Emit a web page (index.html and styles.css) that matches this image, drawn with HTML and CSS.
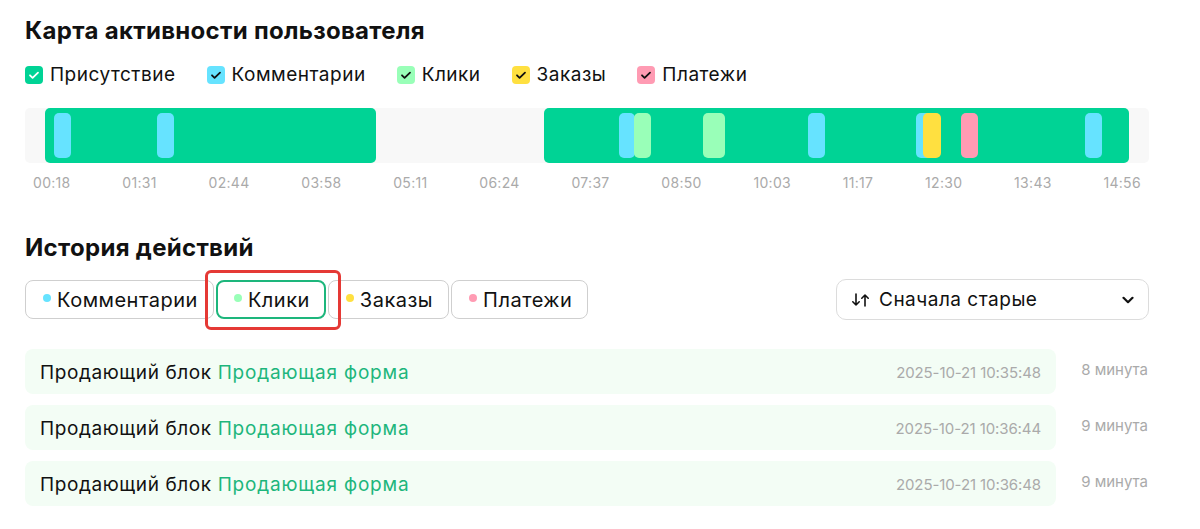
FILE: index.html
```html
<!DOCTYPE html>
<html lang="ru">
<head>
<meta charset="utf-8">
<title>Карта активности пользователя</title>
<link rel="stylesheet" href="styles.css">
</head>
<body>
<div class="page">
  <h1 class="title">Карта активности пользователя</h1>
  <div class="legend">
    <label class="legend-item"><span class="cb cb-presence"><svg viewBox="0 0 18 18"><path d="M5 9.3l2.6 2.6L13 6.6" fill="none" stroke="#fff" stroke-width="1.8" stroke-linecap="round" stroke-linejoin="round"/></svg></span>Присутствие</label>
    <label class="legend-item"><span class="cb cb-comment"><svg viewBox="0 0 18 18"><path d="M5 9.3l2.6 2.6L13 6.6" fill="none" stroke="#111" stroke-width="1.8" stroke-linecap="round" stroke-linejoin="round"/></svg></span>Комментарии</label>
    <label class="legend-item"><span class="cb cb-click"><svg viewBox="0 0 18 18"><path d="M5 9.3l2.6 2.6L13 6.6" fill="none" stroke="#111" stroke-width="1.8" stroke-linecap="round" stroke-linejoin="round"/></svg></span>Клики</label>
    <label class="legend-item"><span class="cb cb-order"><svg viewBox="0 0 18 18"><path d="M5 9.3l2.6 2.6L13 6.6" fill="none" stroke="#111" stroke-width="1.8" stroke-linecap="round" stroke-linejoin="round"/></svg></span>Заказы</label>
    <label class="legend-item"><span class="cb cb-pay"><svg viewBox="0 0 18 18"><path d="M5 9.3l2.6 2.6L13 6.6" fill="none" stroke="#111" stroke-width="1.8" stroke-linecap="round" stroke-linejoin="round"/></svg></span>Платежи</label>
  </div>

  <div class="track">
    <div class="seg" style="left:20px;width:331px"></div>
    <div class="seg" style="left:519px;width:585px"></div>
    <div class="mark m-comment" style="left:29px;width:17px"></div>
    <div class="mark m-comment" style="left:132px;width:17px"></div>
    <div class="mark m-comment" style="left:594px;width:16px"></div>
    <div class="mark m-click" style="left:609px;width:17px"></div>
    <div class="mark m-click" style="left:678px;width:22px"></div>
    <div class="mark m-comment" style="left:783px;width:17px"></div>
    <div class="mark m-comment" style="left:891px;width:17px"></div>
    <div class="mark m-order" style="left:898px;width:18px"></div>
    <div class="mark m-pay" style="left:936px;width:17px"></div>
    <div class="mark m-comment" style="left:1060px;width:17px"></div>
  </div>
  <div class="ticks">
    <span>00:18</span><span>01:31</span><span>02:44</span><span>03:58</span><span>05:11</span><span>06:24</span><span>07:37</span><span>08:50</span><span>10:03</span><span>11:17</span><span>12:30</span><span>13:43</span><span>14:56</span>
  </div>

  <h2 class="title title-2">История действий</h2>
  <div class="toolbar">
    <div class="chips">
      <button class="chip"><span class="dot d-comment"></span>Комментарии</button>
      <button class="chip chip-active"><span class="dot d-click"></span>Клики</button>
      <button class="chip"><span class="dot d-order"></span>Заказы</button>
      <button class="chip"><span class="dot d-pay"></span>Платежи</button>
      <span class="highlight"></span>
    </div>
    <button class="sort">
      <svg class="sort-icon" viewBox="0 0 20 16"><path d="M5 2v11M1.8 9.8L5 13l3.2-3.2" fill="none" stroke="#111" stroke-width="1.6" stroke-linecap="round" stroke-linejoin="round"/><path d="M14 14V3M10.8 6.2L14 3l3.2 3.2" fill="none" stroke="#111" stroke-width="1.6" stroke-linecap="round" stroke-linejoin="round"/></svg>
      <span class="sort-label">Сначала старые</span>
      <svg class="chev" viewBox="0 0 12 8"><path d="M1.5 1.8L6 6.2l4.5-4.4" fill="none" stroke="#111" stroke-width="2.2" stroke-linecap="round" stroke-linejoin="round"/></svg>
    </button>
  </div>

  <div class="list">
    <div class="row">
      <div class="card"><span class="card-text">Продающий блок <span class="accent">Продающая форма</span></span><span class="date">2025-10-21 10:35:48</span></div>
      <span class="ago">8 минута</span>
    </div>
    <div class="row">
      <div class="card"><span class="card-text">Продающий блок <span class="accent">Продающая форма</span></span><span class="date">2025-10-21 10:36:44</span></div>
      <span class="ago">9 минута</span>
    </div>
    <div class="row">
      <div class="card"><span class="card-text">Продающий блок <span class="accent">Продающая форма</span></span><span class="date">2025-10-21 10:36:48</span></div>
      <span class="ago">9 минута</span>
    </div>
  </div>
</div>
</body>
</html>
```

FILE: styles.css
```css
* { box-sizing: border-box; }
html, body { margin: 0; padding: 0; background: #fff; }
body {
  font-family: Inter, "Noto Sans", "DejaVu Sans", sans-serif;
  color: #111;
}
.page {
  width: 1124px;
  margin-left: 25px;
  padding-top: 16px;
}
.title {
  margin: 0;
  font-size: 24px;
  line-height: 30px;
  font-weight: 700;
  color: #111;
  letter-spacing: 0.3px;
}
.title-2 { margin-top: 42px; }

.legend {
  display: flex;
  gap: 31px;
  margin-top: 18px;
  height: 22px;
  align-items: center;
}
.legend-item {
  display: flex;
  align-items: center;
  gap: 7px;
  font-size: 19px;
  letter-spacing: 0.5px;
  line-height: 22px;
}
.cb {
  width: 18px;
  height: 18px;
  border-radius: 4px;
  display: inline-flex;
}
.cb svg { width: 18px; height: 18px; }
.cb-presence { background: #00d395; }
.cb-comment { background: #66e3ff; }
.cb-click { background: #99ffb8; }
.cb-order { background: #ffe040; }
.cb-pay { background: #ff9bb3; }

.track {
  position: relative;
  margin-top: 22px;
  height: 55px;
  background: #f8f8f8;
  border-radius: 5px;
}
.seg {
  position: absolute;
  top: 0;
  bottom: 0;
  background: #00d395;
  border-radius: 5px;
}
.mark {
  position: absolute;
  top: 5px;
  height: 45px;
  border-radius: 5px;
}
.m-comment { background: #66e3ff; }
.m-click { background: #99ffb8; }
.m-order { background: #ffe040; }
.m-pay { background: #ff9bb3; }

.ticks {
  display: flex;
  justify-content: space-between;
  padding: 0 8px;
  margin-top: 12px;
  font-size: 14px;
  letter-spacing: 0.3px;
  line-height: 16px;
  color: #aaa;
}

.toolbar {
  display: flex;
  justify-content: space-between;
  align-items: center;
  margin-top: 16px;
  height: 41px;
}
.chips {
  position: relative;
  display: flex;
  gap: 2px;
}
.chip {
  display: flex;
  align-items: center;
  gap: 6px;
  height: 39px;
  padding: 0 15px 0 17px;
  border: 1px solid #cfcfcf;
  border-radius: 8px;
  background: #fff;
  font-family: inherit;
  font-size: 20px;
  letter-spacing: 0.5px;
  color: #111;
}
.chip-active {
  border: 2px solid #1db67c;
  padding: 0 14px 0 16px;
}
.dot {
  width: 8px;
  height: 8px;
  border-radius: 50%;
  margin-top: -4px;
}
.d-comment { background: #66e3ff; }
.d-click { background: #99ffb8; }
.d-order { background: #ffe040; }
.d-pay { background: #ff9bb3; }
.highlight {
  position: absolute;
  left: 180px;
  top: -10px;
  width: 136px;
  height: 60px;
  border: 3px solid #e53935;
  border-radius: 6px;
  pointer-events: none;
}

.sort {
  display: flex;
  align-items: center;
  width: 313px;
  height: 41px;
  padding: 0 14px 0 14px;
  border: 1px solid #dcdcdc;
  border-radius: 10px;
  background: #fff;
  font-family: inherit;
  font-size: 19px;
  letter-spacing: 0.5px;
  color: #111;
}
.sort-icon { width: 20px; height: 16px; margin-right: 8px; }
.sort-label { flex: 1; text-align: left; }
.chev { width: 12px; height: 8px; }

.list {
  display: flex;
  flex-direction: column;
  gap: 11px;
  margin-top: 29px;
}
.row {
  display: flex;
  align-items: center;
}
.card {
  width: 1031px;
  height: 45px;
  display: flex;
  align-items: center;
  justify-content: space-between;
  padding: 2px 15px 0;
  background: #f3fdf5;
  border-radius: 8px;
  font-size: 19px;
  letter-spacing: 0.6px;
}
.accent { color: #1db67c; letter-spacing: 0.8px; }
.date {
  font-size: 15px;
  letter-spacing: -0.1px;
  color: #aaa;
}
.ago {
  flex: 1;
  text-align: right;
  font-size: 15px;
  color: #aaa;
  margin-bottom: 4px;
  padding-right: 1px;
}
```
